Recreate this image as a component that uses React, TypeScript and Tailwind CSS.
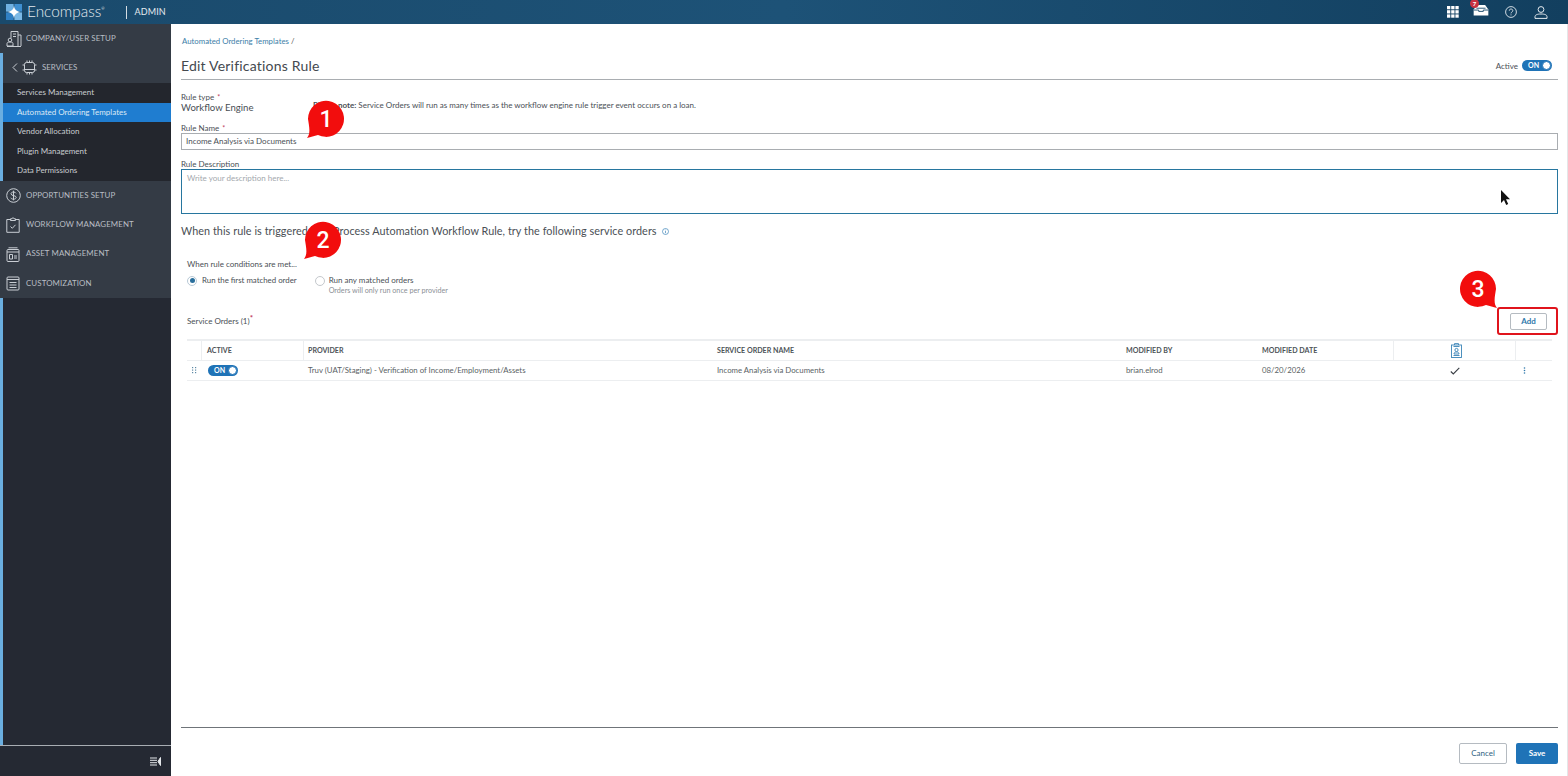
import type { ReactNode } from "react";

const font = "font-['Lato','Liberation_Sans',sans-serif]";

const IconBuilding = () => (
  <svg width="16" height="18" viewBox="0 0 16 18" fill="none" stroke="#c9ced4" strokeWidth="1">
    <path d="M5 8V1.500h7V16M12 5h3v11M7 4h3M7 6.500h3M1 16.500h14" />
    <circle cx="4" cy="10" r="1.800" />
    <path d="M1 16v-2.500c0-1 1-1.500 3-1.500s3 .5 3 1.500V16z" />
  </svg>
);
const IconChip = () => (
  <svg width="15" height="15" viewBox="0 0 15 15" fill="none" stroke="#c9ced4" strokeWidth="1">
    <rect x="2.500" y="2.500" width="10" height="10" rx="2" />
    <path d="M5 .5v2M7.500 .5v2M10 .5v2M5 12.500v2M7.500 12.500v2M10 12.500v2M.5 5h2M.5 10h2M12.500 5h2M12.500 10h2M2.500 9.500h10" />
  </svg>
);
const IconDollar = () => (
  <svg width="15" height="15" viewBox="0 0 15 15" fill="none" stroke="#c9ced4" strokeWidth="1">
    <circle cx="7.500" cy="7.500" r="6.800" />
    <path d="M10 5.300c-.4-.9-1.300-1.300-2.500-1.300-1.400 0-2.500.7-2.500 1.800 0 2.500 5.200 1.200 5.200 3.600 0 1.100-1.200 1.800-2.700 1.800-1.300 0-2.300-.5-2.700-1.400M7.500 2.700v9.600" />
  </svg>
);
const IconClipboard = () => (
  <svg width="14" height="16" viewBox="0 0 14 16" fill="none" stroke="#c9ced4" strokeWidth="1">
    <path d="M4.500 2.500H.8v12.800h12.400V2.500H9.500M4.500 3.500V1.800h1.500a1 1 0 0 1 2 0h1.500v1.700z" />
    <path d="M4.500 9.500l1.800 1.800 3.200-3.500" />
  </svg>
);
const IconAsset = () => (
  <svg width="14" height="15" viewBox="0 0 14 15" fill="none" stroke="#c9ced4" strokeWidth="1">
    <rect x="1" y="2.500" width="12" height="12" rx="1" />
    <path d="M2.500 .8h9M1 5h12M3.500 7.500h3v4.500h-3zM8 9h3M8 11h3" />
  </svg>
);
const IconList = () => (
  <svg width="14" height="15" viewBox="0 0 14 15" fill="none" stroke="#c9ced4" strokeWidth="1">
    <rect x="1" y="1" width="12" height="13" rx="1" />
    <path d="M1 3.500h12M3.500 6.500h7M3.500 9h7M3.500 11.500h7" />
  </svg>
);

const Logo = () => (
  <svg width="16" height="16" viewBox="0 0 16 16">
    <rect width="7.600" height="7.600" fill="#6fb1e2" />
    <rect x="8.400" width="7.600" height="7.600" fill="#3f8fd0" />
    <rect y="8.400" width="7.600" height="7.600" fill="#2f80c4" />
    <rect x="8.400" y="8.400" width="7.600" height="7.600" fill="#7bb9e6" />
    <path d="M8 1.500C8.500 5.500 10.500 7.500 14.500 8 10.500 8.500 8.500 10.500 8 14.500 7.500 10.500 5.500 8.500 1.500 8 5.500 7.500 7.500 5.500 8 1.500z" fill="#fff" />
  </svg>
);

const Toggle = () => (
  <span className="flex h-[11px] w-[30px] items-center justify-between rounded-full bg-[#1f73b7] pl-[6px] pr-px">
    <span className="text-[7px] font-bold leading-none text-white">ON</span>
    <span className="h-[9px] w-[9px] rounded-full border border-[#1f73b7] bg-white" />
  </span>
);

const NavGroup = ({ icon, label }: { icon: ReactNode; label: string }) => (
  <div className="flex h-[29.400px] items-center pl-[6px]">
    <span className="flex w-[20px] justify-start">{icon}</span>
    <span className="text-[7.900px] tracking-[0.1px] text-[#b9bec4]">{label}</span>
  </div>
);

const Req = () => <span className="ml-[1px] align-top text-[7px] text-[#c0395a]">*</span>;

const Callout = ({ n, className, flip }: { n: string; className: string; flip?: boolean }) => (
  <div className={`absolute h-[40px] w-[40px] ${className}`}>
    <svg width="40" height="40" viewBox="0 0 40 40" className={flip ? "absolute inset-0 -scale-x-100" : "absolute inset-0"}>
      <path d="M1 38C5 33 3 26 2 19A18 18 0 1 1 12 35C8 36 5 37 1 38z" fill="#f20d0d" />
    </svg>
    <span className="absolute left-0 top-0 flex h-[38px] w-[40px] items-center justify-center text-[23px] font-medium leading-none text-white font-['Roboto',sans-serif]">
      {n}
    </span>
  </div>
);

const cols = "grid grid-cols-[15px_102px_409px_409px_136px_136px_122px_36px]";
const subRow = "flex h-[19.500px] items-center pb-[1.500px] pl-[14px]";

export default function App() {
  return (
    <div className={`relative flex h-[776px] w-[1568px] flex-col overflow-hidden bg-white text-[#4a4f55] ${font}`}>
      {/* top bar */}
      <header className="flex h-[24px] shrink-0 items-center bg-gradient-to-r from-[#1a4a6c] via-[#1d5277] to-[#123f5f] pl-[6px] pr-[20px]">
        <Logo />
        <span className="ml-[5px] text-[15.400px] font-light leading-none text-[#e4eaef]">Encompass</span>
        <span className="mb-[6px] text-[4px] leading-none text-[#e4eaef]">®</span>
        <span className="ml-[21px] h-[13px] w-px bg-[#d5dde3]" />
        <span className="ml-[8px] text-[9px] tracking-[0.1px] text-[#e4eaef]">ADMIN</span>
        <div className="ml-auto flex items-center">
          <svg width="12" height="12" viewBox="0 0 12 12" fill="#fff">
            {[0, 4.200, 8.400].flatMap((y) =>
              [0, 4.200, 8.400].map((x) => <rect key={`${x}-${y}`} x={x} y={y} width="3.300" height="3.300" />)
            )}
          </svg>
          <span className="relative ml-[14px] block h-[14px] w-[16px]">
            <svg width="16" height="11" viewBox="0 0 16 12" className="absolute top-0">
              <path d="M3.500 0h9L16 5v6.500H0V5z" fill="#fff" />
              <path d="M3 3.500h10M0 5.500h5.500v1.500h5V5.500H16" stroke="#1a4a6c" strokeWidth="1" fill="none" />
            </svg>
            <span className="absolute left-[-3px] top-[-6px] flex h-[9px] w-[9px] items-center justify-center rounded-full bg-[#c8313f] text-[6px] font-bold leading-none text-white">
              7
            </span>
          </span>
          <svg width="12" height="12" viewBox="0 0 12 12" fill="none" stroke="#e4eaef" strokeWidth="0.900" className="ml-[16px]">
            <circle cx="6" cy="6" r="5.400" />
            <path d="M4.300 4.700C4.300 3.700 5 3 6 3s1.800.7 1.800 1.600C7.800 6 6 6 6 7.400M6 8.400v1" />
          </svg>
          <svg width="14" height="13" viewBox="0 0 14 13" fill="none" stroke="#e4eaef" strokeWidth="1" className="ml-[17px]">
            <circle cx="7" cy="3.500" r="2.900" />
            <path d="M1 12.400v-1.800C1 9 3 8 7 8s6 1 6 2.600v1.800z" />
          </svg>
        </div>
      </header>

      <div className="flex min-h-0 flex-1">
        {/* sidebar */}
        <aside className="flex w-[171px] shrink-0 flex-col bg-[#252933]">
          <div className="bg-[#343b45]">
            <NavGroup icon={<IconBuilding />} label="COMPANY/USER SETUP" />
          </div>
          <div className="border-l-[3px] border-[#6aaee0]">
            <div className="flex h-[30px] items-center bg-[#343b45] pb-[1px] pl-[9px]">
              <svg width="6" height="9" viewBox="0 0 6 9" fill="none" stroke="#c9ced4" strokeWidth="1">
                <path d="M5 .5L1 4.500 5 8.500" />
              </svg>
              <span className="ml-[4px] mr-[5px] flex"><IconChip /></span>
              <span className="text-[7.900px] text-[#b9bec4]">SERVICES</span>
            </div>
            <div className="bg-[#23262d] text-[8px] text-[#c8ccd0]">
              <div className={subRow}>Services Management</div>
              <div className={`${subRow} bg-[#1f7dd0] text-[#dde9f5]`}>Automated Ordering Templates</div>
              <div className={subRow}>Vendor Allocation</div>
              <div className={subRow}>Plugin Management</div>
              <div className={subRow}>Data Permissions</div>
            </div>
          </div>
          <div className="bg-[#343b45]">
            <NavGroup icon={<IconDollar />} label="OPPORTUNITIES SETUP" />
            <NavGroup icon={<IconClipboard />} label="WORKFLOW MANAGEMENT" />
            <NavGroup icon={<IconAsset />} label="ASSET MANAGEMENT" />
            <NavGroup icon={<IconList />} label="CUSTOMIZATION" />
          </div>
          <div className="flex-1 border-l-[3px] border-[#6aaee0]" />
          <div className="flex h-[31px] shrink-0 items-center justify-end border-t border-[#a8adb3] pr-[10px]">
            <svg width="11" height="9" viewBox="0 0 11 9" fill="none" stroke="#e4e7ea" strokeWidth="1">
              <path d="M0 1h7M0 3.300h7M0 5.700h7M0 8h7" />
              <path d="M10.500 .5v8L8 4.500z" fill="#e4e7ea" />
            </svg>
          </div>
        </aside>

        {/* main */}
        <main className="flex min-w-0 flex-1 flex-col border-r border-[#e4e6e8] pl-[10px] pr-[9px]">
          <div className="ml-[1px] mt-[12px] h-[10px] text-[7.800px] leading-[10px] text-[#3c7ea8]">
            Automated Ordering Templates <span className="text-[#555]">/</span>
          </div>
          <div className="mt-[9px] flex h-[21px] items-center justify-between pr-[6px]">
            <h1 className="text-[14px] font-normal tracking-[0.2px] text-[#44494f]">Edit Verifications Rule</h1>
            <div className="flex items-center gap-[4px]">
              <span className="text-[8px]">Active</span>
              <Toggle />
            </div>
          </div>
          <div className="mt-[3px] h-px bg-[#a9adb1]" />

          <div className="mt-[12px] flex">
            <div className="w-[132px]">
              <div className="text-[8px] leading-[10px]">Rule type <Req /></div>
              <div className="text-[9.600px] leading-[12px] text-[#4a4f55]">Workflow Engine</div>
            </div>
            <div className="mt-[8px] text-[8px] leading-[10px]"><b>Please note:</b> Service Orders will run as many times as the workflow engine rule trigger event occurs on a loan.</div>
          </div>

          <div className="mt-[9px] text-[8px] leading-[10px]">Rule Name <Req /></div>
          <div className="flex h-[17px] items-center border border-[#a9adb1] pb-[1px] pl-[4px] text-[8px]">
            Income Analysis via Documents
          </div>

          <div className="mt-[9px] text-[8px] leading-[10px]">Rule Description</div>
          <div className="h-[45px] border border-[#27769f] pl-[5px] pt-[2px] text-[8px] leading-[12px] text-[#a3a8ad]">
            Write your description here...
          </div>

          <div className="mt-[10px] flex h-[14px] items-center text-[10.800px] tracking-[0.060px] text-[#4a4f55]">
            When this rule is triggered by a Process Automation Workflow Rule, try the following service orders
            <svg width="7" height="7" viewBox="0 0 7 7" fill="none" stroke="#3c84b8" strokeWidth="0.700" className="ml-[5px]">
              <circle cx="3.500" cy="3.500" r="3" />
              <path d="M3.500 3v2.200M3.500 1.700v.6" />
            </svg>
          </div>

          <div className="ml-[6px]">
            <div className="mt-[21px] text-[8px] leading-[10px]">When rule conditions are met...</div>
            <div className="mt-[6px] flex h-[21px]">
              <div className="flex h-[11px] items-center">
                <span className="flex h-[10px] w-[10px] items-center justify-center rounded-full border border-[#b8c9d6] bg-white">
                  <span className="h-[5px] w-[5px] rounded-full bg-[#2a6f9c]" />
                </span>
                <span className="ml-[5px] text-[7.850px]">Run the first matched order</span>
              </div>
              <div className="ml-[18px] flex">
                <span className="mt-[.5px] h-[10px] w-[10px] rounded-full border border-[#c4c8cc] bg-white" />
                <div className="ml-[4px]">
                  <div className="text-[8px] leading-[11px]">Run any matched orders</div>
                  <div className="text-[7.200px] leading-[10px] text-[#8b9096]">Orders will only run once per provider</div>
                </div>
              </div>
            </div>
            <div className="mt-[18px] flex h-[14px] items-center justify-between">
              <span className="text-[8px]">
                Service Orders (1)
                <span className="relative top-[-3px] text-[8px] font-bold text-[#c0395a]">*</span>
              </span>
              <button className="mr-[11px] flex h-[17px] w-[37px] items-center justify-center rounded-[2px] border border-[#b5bbc1] bg-white text-[8px] font-bold text-[#2f78ab]">
                Add
              </button>
            </div>

            {/* table */}
            <div className="mt-[11px] w-[1365px] border-t-2 border-[#eceef0]">
              <div className={`${cols} h-[20px] items-center border-b border-[#eceef0] text-[7.100px] text-[#4d5257]`}>
                <span className="h-full border-r border-[#eceef0]" />
                <span className="flex h-full items-center border-r border-[#eceef0] pl-[5px] pt-[2px] font-bold">ACTIVE</span>
                <span className="pl-[4px] pt-[2px] font-bold">PROVIDER</span>
                <span className="pl-[4px] pt-[2px] font-bold">SERVICE ORDER NAME</span>
                <span className="pl-[4px] pt-[2px] font-bold">MODIFIED BY</span>
                <span className="flex h-full items-center border-r border-[#eceef0] pl-[4px] pt-[2px] font-bold">MODIFIED DATE</span>
                <span className="flex h-full items-center justify-center border-r border-[#eceef0] pl-[3px]">
                  <svg width="11" height="15" viewBox="0 0 11 15" fill="none" stroke="#3a85b8" strokeWidth="0.900">
                    <rect x=".5" y="2" width="10" height="12.500" />
                    <path d="M3.500 2V.6h4V2M2.500 3.500h6M2.500 12.500h6" />
                    <circle cx="5.500" cy="7" r="1.600" />
                    <path d="M3 11c0-1.500 1-2 2.500-2S8 9.500 8 11z" />
                  </svg>
                </span>
                <span />
              </div>
              <div className={`${cols} h-[20px] items-center border-b border-[#eceef0] text-[7.800px] text-[#5a5f65]`}>
                <span className="flex justify-center">
                  <svg width="5" height="7" viewBox="0 0 5 7" fill="#5e8aa6">
                    {[0, 2.500, 5].flatMap((y) =>
                      [0, 3].map((x) => <rect key={`${x}-${y}`} x={x} y={y} width="1.200" height="1.200" />)
                    )}
                  </svg>
                </span>
                <span className="pl-[6px]"><Toggle /></span>
                <span className="pl-[4px]">Truv (UAT/Staging) - Verification of Income/Employment/Assets</span>
                <span className="pl-[4px]">Income Analysis via Documents</span>
                <span className="pl-[4px]">brian.elrod</span>
                <span className="pl-[4px]">08/20/2026</span>
                <span className="flex justify-center">
                  <svg width="10" height="8" viewBox="0 0 10 8" fill="none" stroke="#3a3f45" strokeWidth="1.100">
                    <path d="M.8 4.500L3.300 7 9.300 .8" />
                  </svg>
                </span>
                <span className="flex justify-start pl-[7px]">
                  <svg width="3" height="7" viewBox="0 0 3 7" fill="#2f78ab">
                    <circle cx="1.500" cy="1" r=".8" />
                    <circle cx="1.500" cy="3.500" r=".8" />
                    <circle cx="1.500" cy="6" r=".8" />
                  </svg>
                </span>
              </div>
            </div>
          </div>

          {/* footer */}
          <div className="mt-auto flex h-[49px] items-center justify-end gap-[9px] border-t border-[#6f7479] pt-[2px]">
            <button className="h-[21px] w-[48px] rounded-[2px] border border-[#b5bbc1] bg-white text-[8px] text-[#2f5f82]">Cancel</button>
            <button className="h-[21px] w-[42px] rounded-[2px] bg-[#1f73b7] text-[8px] font-bold text-white">Save</button>
          </div>
        </main>
      </div>

      {/* annotations over the page */}
      <Callout n="1" className="left-[306px] top-[100px]" />
      <Callout n="2" className="left-[303px] top-[221px]" />
      <Callout n="3" className="left-[1458px] top-[270px]" flip />
      <div className="pointer-events-none absolute left-[1497px] top-[307px] h-[28px] w-[61px] rounded-[3px] border-2 border-[#e0141c]" />
      <svg width="11" height="16" viewBox="0 0 11 16" className="absolute left-[1500px] top-[190px]">
        <path d="M1 0v13l3-3 2.200 5 2-1-2.200-4.800H10z" fill="#111" />
      </svg>
    </div>
  );
}
